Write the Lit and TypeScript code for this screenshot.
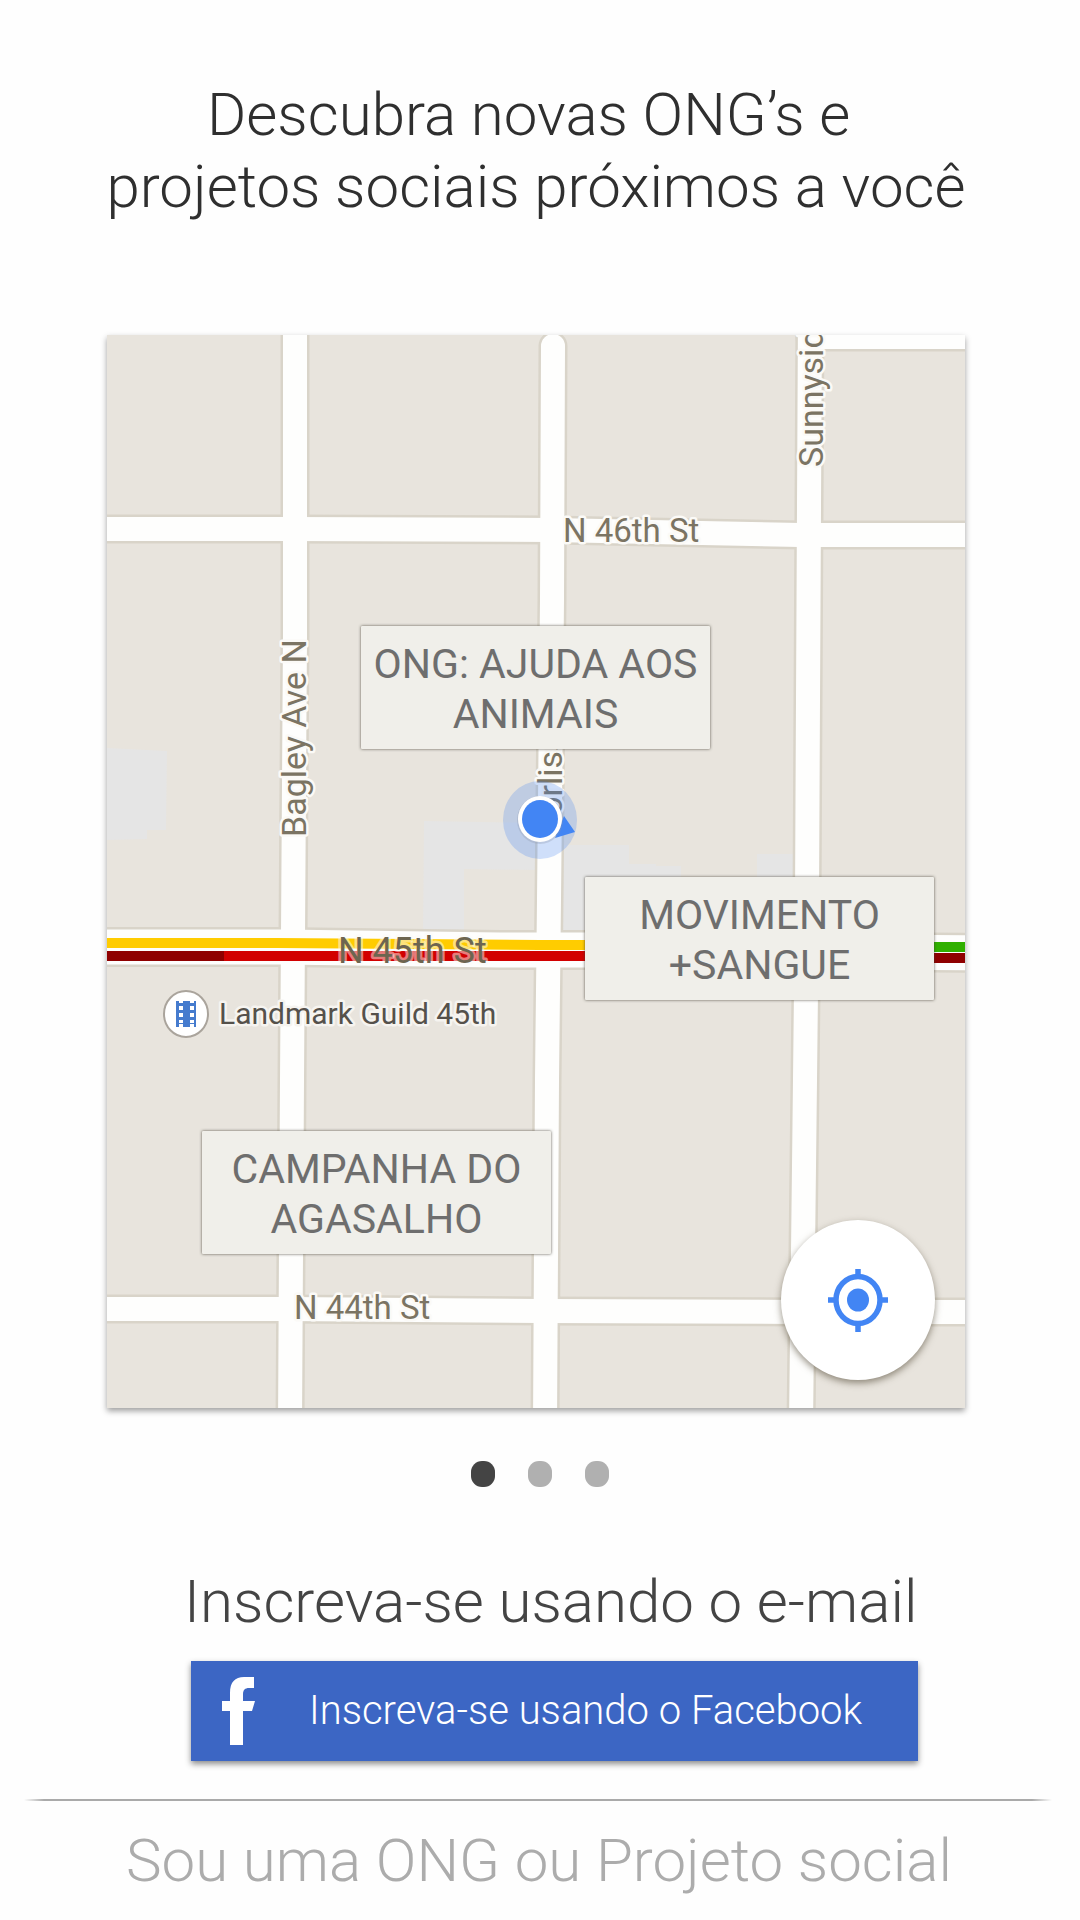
import { LitElement, html, svg, css } from "lit";
import { customElement, state } from "lit/decorators.js";
import { classMap } from "lit/directives/class-map.js";

const MAP_WIDTH = 858;
const MAP_HEIGHT = 1073;

interface Place {
  lines: [string, string];
  x: number;
  y: number;
}

const PLACES: Place[] = [
  { lines: ["ONG: AJUDA AOS", "ANIMAIS"], x: 254, y: 291 },
  { lines: ["MOVIMENTO", "+SANGUE"], x: 478, y: 542 },
  { lines: ["CAMPANHA DO", "AGASALHO"], x: 95, y: 796 },
];

const STREETS = [
  "M-20 194 H180 L445 195 L693 200 H880",
  "M188 -20 V300 L186 600 L185 745 L183 1090",
  "M446 11 L445 265 L442 565 L440 745 L438 1090",
  "M703 -20 L701 365 L700 565 L698 745 L694 1090",
  "M-20 974 H180 L433 976 L693 977 H880",
  "M703 2 H880",
];
const MAIN_STREET = "M-20 612 H175 L393 615 H483 L880 618";

@customElement("street-map")
export class StreetMap extends LitElement {
  static styles = css`
    :host {
      display: block;
      position: relative;
      background: #e8e4dd;
      box-shadow: 0 3px 6px rgba(0, 0, 0, 0.38);
      font-family: Roboto, "Liberation Sans", sans-serif;
      font-weight: 400;
    }
    .canvas {
      display: block;
      width: 100%;
      height: auto;
    }
    .casing {
      fill: none;
      stroke: #d9d4c9;
      stroke-width: 29;
      stroke-linecap: round;
    }
    .road {
      fill: none;
      stroke: #fefefd;
      stroke-width: 24;
      stroke-linecap: round;
    }
    .casing.main {
      stroke-width: 40;
    }
    .road.main {
      stroke-width: 35;
    }
    .building {
      fill: #e5e5e5;
    }
    .lane {
      fill: none;
      stroke-width: 10;
    }
    .moderate {
      stroke: #ffcc00;
    }
    .slow {
      stroke: #d20000;
    }
    .stopped {
      stroke: #8f0000;
    }
    .free {
      stroke: #30b000;
    }
    .street {
      font-size: 33px;
      fill: #7b7463;
      stroke: #fbfaf7;
      stroke-width: 5;
      stroke-linejoin: round;
      paint-order: stroke;
    }
    .street.upright {
      font-size: 34px;
    }
    .street.main {
      font-size: 36px;
      stroke-opacity: 0.5;
      fill: #6d6550;
    }
    .landmark {
      font-size: 30px;
      fill: #55514b;
      stroke: #f6f4f0;
      stroke-width: 5;
      stroke-linejoin: round;
      paint-order: stroke;
    }
    .place {
      position: absolute;
      box-sizing: border-box;
      width: 349px;
      height: 123px;
      padding: 12px 0 10px;
      border: 0;
      border-radius: 1px;
      background: #f0efea;
      box-shadow: 0 0 3px rgba(60, 55, 45, 0.85);
      color: #6e6e6e;
      font: 400 41px/50px Roboto, "Liberation Sans", sans-serif;
      text-align: center;
      white-space: nowrap;
      cursor: pointer;
    }
    .locate {
      position: absolute;
      display: flex;
      align-items: center;
      justify-content: center;
      width: 154px;
      height: 160px;
      padding: 0;
      border: 0;
      border-radius: 50%;
      background: #fff;
      box-shadow: 0 3px 7px rgba(70, 60, 40, 0.55);
      cursor: pointer;
    }
    .target {
      width: 61px;
      height: 63px;
    }
  `;

  private at(x: number, y: number) {
    return `left:${(x / MAP_WIDTH) * 100}%;top:${(y / MAP_HEIGHT) * 100}%`;
  }

  render() {
    return html`
      <svg class="canvas" viewBox="0 0 ${MAP_WIDTH} ${MAP_HEIGHT}" role="img" aria-label="Mapa">
        <path class="building" d="M0 413 L60 416 L59 495 H40 V504 L0 505 Z" />
        <path class="building" d="M317 486 L430 488 V535 L357 534 V600 H316 Z" />
        <path class="building" d="M455 510 H522 V529 H549 V531 H574 V600 H455 Z" />
        <path class="building" d="M650 519 H692 V600 H650 Z" />
        ${STREETS.map((d) => svg`<path class="casing" d=${d} />`)}
        <path class="casing main" d=${MAIN_STREET} />
        ${STREETS.map((d) => svg`<path class="road" d=${d} />`)}
        <path class="road main" d=${MAIN_STREET} />
        <path class="lane moderate" d="M0 608 H170 L433 610 H600" />
        <path class="lane slow" d="M0 621 H600" />
        <path class="lane stopped" d="M0 621 H117" />
        <path class="lane free" d="M600 612 H858" />
        <path class="lane stopped" d="M600 623 H858" />

        <text class="street" x="456" y="207">N 46th St</text>
        <text class="street main" x="231" y="628">N 45th St</text>
        <text class="street" x="187" y="984">N 44th St</text>
        <text class="street upright" transform="translate(199 502) rotate(-90)">Bagley Ave N</text>
        <text class="street upright" transform="translate(455 503) rotate(-90)">Corliss Ave N</text>
        <text class="street upright" transform="translate(716 132) rotate(-90)">Sunnysid</text>

        <ellipse cx="79" cy="679" rx="22" ry="23" fill="#fff" stroke="#aaa49c" stroke-width="2" />
        <path
          fill="#457bce"
          fill-rule="evenodd"
          d="M69 666h3v2h4v-2h7v2h4v-2h2v26h-2v-3h-4v3h-7v-3h-4v3h-3zM72 671v4h4v-4zM72 678v4h4v-4zM72 685v3h4v-3zM83 671v4h4v-4zM83 678v4h4v-4zM83 685v3h4v-3z"
        />
        <text class="landmark" x="112" y="689">Landmark Guild 45th</text>

        <ellipse cx="433" cy="485" rx="37" ry="39" fill="#4285f4" fill-opacity="0.25" />
        <path fill="#4285f4" d="M457 481 L468 497 L448 503 Z" />
        <ellipse cx="433" cy="485" rx="23" ry="24" fill="#8a94a8" fill-opacity="0.3" />
        <ellipse cx="433" cy="484" rx="22" ry="23" fill="#fff" />
        <ellipse cx="433" cy="484" rx="18" ry="19" fill="#4285f4" />
      </svg>
      ${PLACES.map(
        (p) => html`<button class="place" type="button" style=${this.at(p.x, p.y)}>
          ${p.lines[0]}<br />${p.lines[1]}
        </button>`
      )}
      <button class="locate" type="button" aria-label="Minha localização" style=${this.at(674, 885)}>
        <svg class="target" viewBox="0 0 61 63" aria-hidden="true">
          <ellipse cx="30" cy="31" rx="22" ry="23.5" fill="none" stroke="#4285f4" stroke-width="5.5" />
          <ellipse cx="30" cy="31" rx="11" ry="11.5" fill="#4285f4" />
          <path
            d="M30 0V8M30 54V63M0 31H8M52 31H60"
            stroke="#4285f4"
            stroke-width="5.5"
          />
        </svg>
      </button>
    `;
  }
}

@customElement("app-root")
export class AppRoot extends LitElement {
  static styles = css`
    :host {
      display: block;
      background: #fefefe;
      color: #2f2f2f;
      font-family: Roboto, "Liberation Sans", sans-serif;
      font-weight: 300;
    }
    .page {
      display: flex;
      flex-direction: column;
      box-sizing: border-box;
      min-height: 100vh;
      padding: 79px 0 23px;
    }
    .title {
      margin: 0;
      font-size: 60px;
      line-height: 72px;
      font-weight: 300;
      text-align: center;
      padding-right: 8px;
    }
    .map {
      margin: 112px 115px 0 107px;
    }
    .dots {
      display: flex;
      justify-content: center;
      gap: 33px;
      margin-top: 53px;
    }
    .dot {
      width: 24px;
      height: 26px;
      padding: 0;
      border: 0;
      border-radius: 11px;
      background: #b0b0b0;
      cursor: pointer;
    }
    .dot.active {
      background: #444;
    }
    .signup {
      display: flex;
      flex-direction: column;
      gap: 23px;
      margin: 79px 162px 0 184px;
    }
    .email {
      color: #444;
      font-size: 60px;
      line-height: 72px;
      text-decoration: none;
      white-space: nowrap;
    }
    .facebook {
      display: flex;
      align-items: center;
      height: 100px;
      margin-left: 7px;
      padding: 0 31px;
      gap: 53px;
      border: 0;
      background: #3c66c4;
      box-shadow: 0 3px 6px rgba(0, 0, 0, 0.45);
      color: #fff;
      font: 300 40px/48px Roboto, "Liberation Sans", sans-serif;
      white-space: nowrap;
      cursor: pointer;
    }
    .mark {
      flex: none;
      width: 34px;
      height: 68px;
    }
    .rule {
      width: calc(100% - 52px);
      height: 2px;
      margin: 38px 28px 24px 24px;
      border: 0;
      background: linear-gradient(to right, transparent, #aaa 20px, #aaa calc(100% - 20px), transparent);
    }
    .organization {
      padding-right: 2px;
      color: #acacac;
      font-size: 60px;
      line-height: 72px;
      font-weight: 300;
      text-align: center;
      text-decoration: none;
    }
  `;

  @state() private slide = 0;

  render() {
    return html`
      <main class="page">
        <h1 class="title">Descubra novas ONG’s e&nbsp;<br />projetos sociais próximos a você</h1>
        <street-map class="map"></street-map>
        <nav class="dots" aria-label="Páginas">
          ${[0, 1, 2].map(
            (i) => html`<button
              type="button"
              class=${classMap({ dot: true, active: i === this.slide })}
              aria-label="Página ${i + 1}"
              @click=${() => (this.slide = i)}
            ></button>`
          )}
        </nav>
        <section class="signup">
          <a class="email" href="#email">Inscreva-se usando o e-mail</a>
          <button class="facebook" type="button">
            <svg class="mark" viewBox="0 0 34 68" aria-hidden="true">
              <path
                fill="#fff"
                d="M8 68V34H0V24H8V16C8 5 13 0 22 0H32V11H27C23 11 21 13 21 17V24H33L30 34H21V68Z"
              />
            </svg>
            <span>Inscreva-se usando o Facebook</span>
          </button>
        </section>
        <hr class="rule" />
        <a class="organization" href="#organizacao">Sou uma ONG ou Projeto social</a>
      </main>
    `;
  }
}
